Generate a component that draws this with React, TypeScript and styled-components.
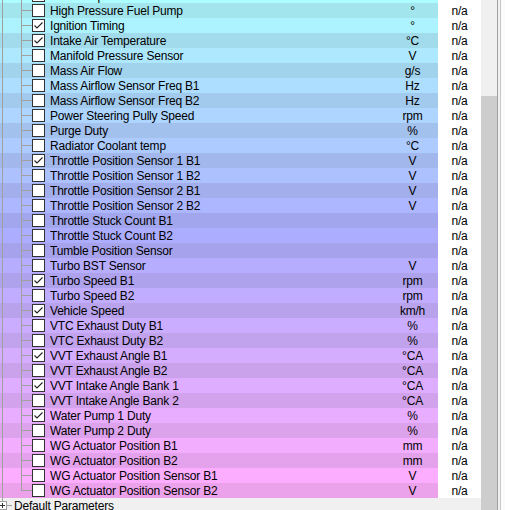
import React from 'react';
import styled, { createGlobalStyle } from 'styled-components';

const Global = createGlobalStyle`
  html, body { margin: 0; padding: 0; background: #f0f0f0; }
  body {
    font-family: "Liberation Sans", Arial, sans-serif;
    font-size: 12px;
    color: #000;
  }
`;

type Item = { name: string; unit: string; checked?: boolean };

const items: Item[] = [
  { name: 'Fuel Temperature Sensor', unit: '°C' },
  { name: 'High Pressure Fuel Pump', unit: '°' },
  { name: 'Ignition Timing', unit: '°', checked: true },
  { name: 'Intake Air Temperature', unit: '°C', checked: true },
  { name: 'Manifold Pressure Sensor', unit: 'V' },
  { name: 'Mass Air Flow', unit: 'g/s' },
  { name: 'Mass Airflow Sensor Freq B1', unit: 'Hz' },
  { name: 'Mass Airflow Sensor Freq B2', unit: 'Hz' },
  { name: 'Power Steering Pully Speed', unit: 'rpm' },
  { name: 'Purge Duty', unit: '%' },
  { name: 'Radiator Coolant temp', unit: '°C' },
  { name: 'Throttle Position Sensor 1 B1', unit: 'V', checked: true },
  { name: 'Throttle Position Sensor 1 B2', unit: 'V' },
  { name: 'Throttle Position Sensor 2 B1', unit: 'V' },
  { name: 'Throttle Position Sensor 2 B2', unit: 'V' },
  { name: 'Throttle Stuck Count B1', unit: '' },
  { name: 'Throttle Stuck Count B2', unit: '' },
  { name: 'Tumble Position Sensor', unit: '' },
  { name: 'Turbo BST Sensor', unit: 'V' },
  { name: 'Turbo Speed B1', unit: 'rpm', checked: true },
  { name: 'Turbo Speed B2', unit: 'rpm' },
  { name: 'Vehicle Speed', unit: 'km/h', checked: true },
  { name: 'VTC Exhaust Duty B1', unit: '%' },
  { name: 'VTC Exhaust Duty B2', unit: '%' },
  { name: 'VVT Exhaust Angle B1', unit: '°CA', checked: true },
  { name: 'VVT Exhaust Angle B2', unit: '°CA' },
  { name: 'VVT Intake Angle Bank 1', unit: '°CA', checked: true },
  { name: 'VVT Intake Angle Bank 2', unit: '°CA' },
  { name: 'Water Pump 1 Duty', unit: '%', checked: true },
  { name: 'Water Pump 2 Duty', unit: '%' },
  { name: 'WG Actuator Position B1', unit: 'mm' },
  { name: 'WG Actuator Position B2', unit: 'mm' },
  { name: 'WG Actuator Position Sensor B1', unit: 'V' },
  { name: 'WG Actuator Position Sensor B2', unit: 'V' },
];

const LINE = '#a0a0a0';

const Frame = styled.div`
  display: flex;
  width: 505px;
  height: 510px;
  overflow: hidden;
`;

const TreePane = styled.div`
  width: 481px;
  height: 510px;
  flex-shrink: 0;
  overflow: hidden;
  background: #f0f0f0;
  display: flex;
  flex-direction: column;
`;

const ScrollContent = styled.div`
  margin-top: -12px;
  display: flex;
  flex-direction: column;
`;

const Row = styled.div`
  display: flex;
  align-items: flex-start;
  height: 15px;
  line-height: 14px;
  flex-shrink: 0;
  white-space: nowrap;
  letter-spacing: -0.2px;
`;

const Guides = styled.div<{ $last?: boolean }>`
  width: 32px;
  height: 15px;
  flex-shrink: 0;
  background:
    linear-gradient(${LINE}, ${LINE}) 2px 0 / 1px 15px no-repeat,
    linear-gradient(${LINE}, ${LINE}) 21px 0 / 1px ${(p) => (p.$last ? '8px' : '15px')} no-repeat,
    linear-gradient(${LINE}, ${LINE}) 22px 7px / 10px 1px no-repeat;
`;

const Box = styled.span`
  width: 13px;
  height: 13px;
  margin-top: 1px;
  box-sizing: border-box;
  border: 1px solid #333;
  background: #fff;
  flex-shrink: 0;
  display: flex;
`;

const Name = styled.span`
  flex: 1;
  margin-left: 5px;
  padding-top: 1px;
  overflow: hidden;
`;

const Unit = styled.span`
  width: 51px;
  flex-shrink: 0;
  padding-top: 1px;
  text-align: center;
`;

const Value = styled.span`
  width: 43px;
  height: 15px;
  box-sizing: border-box;
  padding-top: 1px;
  flex-shrink: 0;
  background: #fff;
  text-align: center;
`;

const RootRow = styled(Row)`
  background: #f0f0f0;
`;

const Expander = styled.div`
  width: 14px;
  height: 15px;
  flex-shrink: 0;
  display: flex;
  align-items: center;
  margin-left: -2px;
  background:
    linear-gradient(${LINE}, ${LINE}) 4px 0 / 1px 3px no-repeat,
    linear-gradient(${LINE}, ${LINE}) 9px 7px / 5px 1px no-repeat;
`;

const PlusBox = styled.span`
  width: 9px;
  height: 9px;
  box-sizing: border-box;
  border: 1px solid ${LINE};
  background: #fff;
  display: flex;
`;

const RootLabel = styled.span`
  margin-left: 2px;
  padding-top: 1px;
`;

const Scrollbar = styled.div`
  width: 16px;
  flex-shrink: 0;
  background: #f0f0f0;
  display: flex;
  flex-direction: column;
`;

const Thumb = styled.div`
  margin-top: 96px;
  flex: 1;
  background: #cdcdcd;
`;

const Edge = styled.div`
  flex: 1;
  border-left: 1px solid #a0a0a0;
  background: linear-gradient(to right, #f0f0f0 0 2px, #c8c8c8 2px 3px, #fbfbfb 3px);
`;

function rowColor(i: number): string {
  const hue = 186 + i * 3.6;
  return i % 2 === 0 ? `hsl(${hue}, 66%, 78%)` : `hsl(${hue}, 100%, 84%)`;
}

const Check = () => (
  <svg width="11" height="11" viewBox="0 0 11 11">
    <polyline points="1.5,5.5 4,8 9.5,2.5" fill="none" stroke="#222" strokeWidth="1.1" />
  </svg>
);

const Plus = () => (
  <svg width="7" height="7" viewBox="0 0 7 7">
    <path d="M1 3.5H6M3.5 1V6" stroke="#333" strokeWidth="1" />
  </svg>
);

export default function App() {
  return (
    <>
      <Global />
      <Frame>
        <TreePane>
          <ScrollContent>
            {items.map((it, idx) => {
              const i = idx - 1;
              return (
                <Row key={it.name} style={{ background: rowColor(i) }}>
                  <Guides $last={idx === items.length - 1} />
                  <Box>{it.checked ? <Check /> : null}</Box>
                  <Name>{it.name}</Name>
                  <Unit>{it.unit}</Unit>
                  <Value>n/a</Value>
                </Row>
              );
            })}
            <RootRow>
              <Expander>
                <PlusBox>
                  <Plus />
                </PlusBox>
              </Expander>
              <RootLabel>Default Parameters</RootLabel>
            </RootRow>
          </ScrollContent>
        </TreePane>
        <Scrollbar>
          <Thumb />
        </Scrollbar>
        <Edge />
      </Frame>
    </>
  );
}
